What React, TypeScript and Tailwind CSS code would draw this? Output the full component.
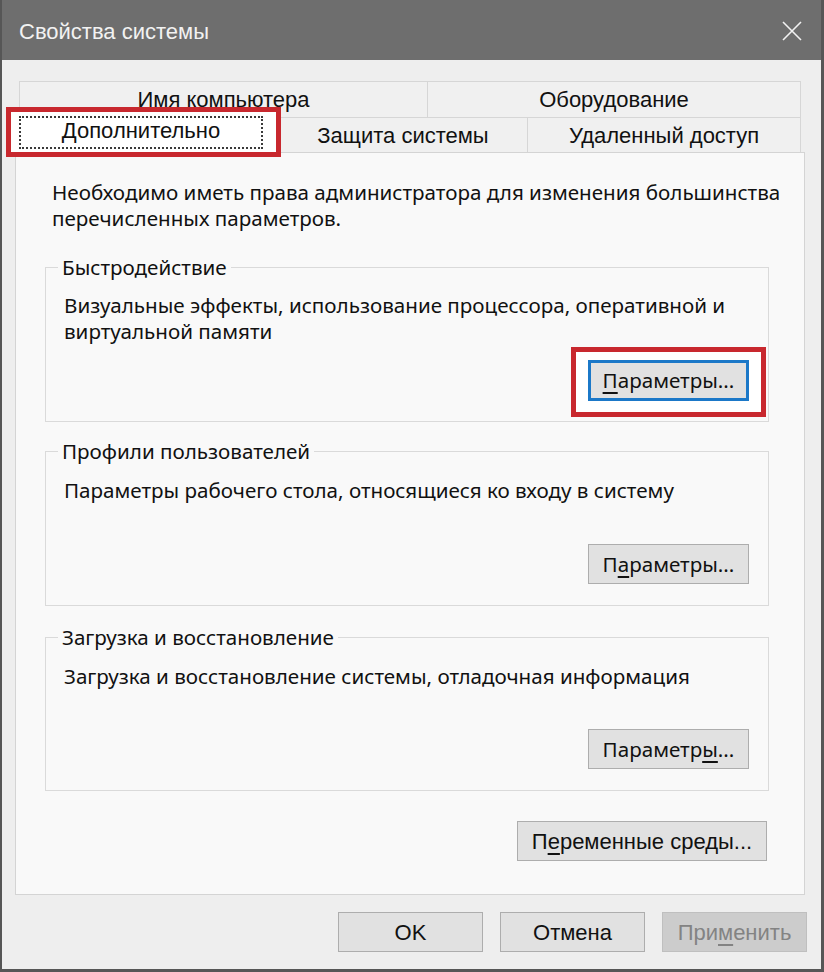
import React from 'react';

const narrow = "font-['Liberation_Sans',Arial,sans-serif]";

const Btn = ({ children, className = '' }: { children: React.ReactNode; className?: string }) => (
  <button
    className={`h-[40px] border border-[#adadad] bg-[#e1e1e1] text-[#111] flex items-center justify-center ${className}`}
  >
    {children}
  </button>
);

export default function App() {
  return (
    <div className="w-[824px] h-[972px] flex flex-col bg-[#eeeeee] border-l-2 border-r-[3px] border-b-[3px] border-[#565656] font-['Noto_Sans',sans-serif] text-[20.6px]">
      {/* title bar */}
      <div className={`h-[60px] shrink-0 bg-[#6e6e6e] flex items-center justify-between pl-[17px] pr-[19px] ${narrow}`}>
        <span className="text-[22px] text-[#f2f2f2] pt-[2px]">Свойства системы</span>
        <svg width="20" height="20" viewBox="0 0 20 20" className="mt-[2px]">
          <path d="M1 1 L19 19 M19 1 L1 19" stroke="#f2f2f2" strokeWidth="1.6" fill="none" />
        </svg>
      </div>

      <div className="pl-[13px] pt-[21px] flex flex-col">
        {/* tabs */}
        <div className={`ml-[4px] flex h-[36px] text-[22px] text-[#111] ${narrow}`}>
          <div className="w-[408px] border-t border-l border-[#d6d6d6] bg-[#f0f0f0] flex items-center justify-center">
            Имя компьютера
          </div>
          <div className="w-[374px] border-t border-l border-r border-[#d6d6d6] bg-[#f0f0f0] flex items-center justify-center">
            Оборудование
          </div>
        </div>
        <div className={`ml-[4px] flex items-end h-[35px] text-[22px] text-[#111] ${narrow}`}>
          <div className="relative z-10 -ml-[4px] -mr-[2px] -mb-[1px] w-[265px] h-[41px] bg-white pl-[4px] pt-[4px]">
            <div className="absolute -left-[9px] -top-[5px] -right-[1px] -bottom-[4px] border-[5px] border-[#c8282e] shadow-[inset_0_0_0_4px_white]" />
            <div className="relative w-[244px] h-[33px] border-2 border-dotted border-[#3a3a3a] flex items-center justify-center pb-[4px]">
              Дополнительно
            </div>
          </div>
          <div className="w-[249px] h-[35px] border-t border-l border-[#d6d6d6] bg-[#f0f0f0] flex items-center justify-center">
            Защита системы
          </div>
          <div className="w-[274px] h-[35px] border-t border-l border-r border-[#d6d6d6] bg-[#f0f0f0] flex items-center justify-center">
            Удаленный доступ
          </div>
        </div>

        {/* panel */}
        <div className="w-[790px] h-[743px] border border-[#d4d4d4] bg-[#f9f9f9] pt-[26px] flex flex-col">
          <p className="pl-[36px] leading-[26px] text-[#111] whitespace-nowrap">
            Необходимо иметь права администратора для изменения большинства
            <br />
            перечисленных параметров.
          </p>

          <fieldset className="mt-[23px] ml-[29px] w-[724px] border border-[#dadada] pl-[18px] pr-[19px] pb-[20px]">
            <legend className="-ml-[6px] px-[4px] leading-[26px] text-[#111]">Быстродействие</legend>
            <p className="mt-[12px] leading-[26px] text-[#111] whitespace-nowrap">
              Визуальные эффекты, использование процессора, оперативной и
              <br />
              виртуальной памяти
            </p>
            <div className="mt-[16px] flex justify-end">
              <div className="relative w-[161px] h-[41px]">
                <div className="absolute -left-[17px] -top-[13px] -right-[17px] -bottom-[16px] border-[5px] border-[#c8282e] bg-white" />
                <button className="relative w-[161px] h-[41px] border-[3px] border-[#1b78c8] bg-[#e1e1e1] text-[#111] flex items-center justify-center">
                  <span>
                    <u className="underline-offset-[4px]">П</u>араметры...
                  </span>
                </button>
              </div>
            </div>
          </fieldset>

          <fieldset className="mt-[16px] ml-[29px] w-[724px] border border-[#dadada] pl-[18px] pr-[19px] pb-[21px]">
            <legend className="-ml-[6px] px-[4px] leading-[26px] text-[#111]">Профили пользователей</legend>
            <p className="mt-[13px] leading-[26px] text-[#111] whitespace-nowrap">
              Параметры рабочего стола, относящиеся ко входу в систему
            </p>
            <div className="mt-[41px] flex justify-end">
              <Btn className="w-[161px]">
                <span>
                  П<u className="underline-offset-[4px]">а</u>раметры...
                </span>
              </Btn>
            </div>
          </fieldset>

          <fieldset className="mt-[18px] ml-[29px] w-[724px] border border-[#dadada] pl-[18px] pr-[19px] pb-[21px]">
            <legend className="-ml-[6px] px-[4px] leading-[26px] text-[#111]">Загрузка и восстановление</legend>
            <p className="mt-[13px] leading-[26px] text-[#111] whitespace-nowrap">
              Загрузка и восстановление системы, отладочная информация
            </p>
            <div className="mt-[40px] flex justify-end">
              <Btn className="w-[161px]">
                <span>
                  Параметр<u className="underline-offset-[4px]">ы</u>...
                </span>
              </Btn>
            </div>
          </fieldset>

          <div className="mt-[30px] pr-[37px] flex justify-end">
            <Btn className={`w-[250px] text-[22px] ${narrow}`}>
              <span>
                П<u className="underline-offset-[4px]">е</u>ременные среды...
              </span>
            </Btn>
          </div>
        </div>

        {/* dialog buttons */}
        <div className={`mt-[17px] pr-[14px] flex justify-end gap-[17px] text-[22px] ${narrow}`}>
          <Btn className="w-[145px]">OK</Btn>
          <Btn className="w-[145px]">Отмена</Btn>
          <button className="w-[145px] h-[40px] border border-[#bfbfbf] bg-[#cccccc] text-[#838383] flex items-center justify-center">
            <span>
              При<u className="underline-offset-[4px]">м</u>енить
            </span>
          </button>
        </div>
      </div>
    </div>
  );
}
